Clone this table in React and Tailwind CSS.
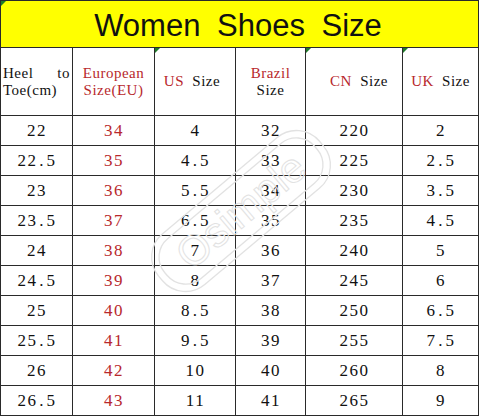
import React from 'react'

const rows = [
  ['22', '34', '4', '32', '220', '2'],
  ['22.5', '35', '4.5', '33', '225', '2.5'],
  ['23', '36', '5.5', '34', '230', '3.5'],
  ['23.5', '37', '6.5', '35', '235', '4.5'],
  ['24', '38', '7', '36', '240', '5'],
  ['24.5', '39', '8', '37', '245', '6'],
  ['25', '40', '8.5', '38', '250', '6.5'],
  ['25.5', '41', '9.5', '39', '255', '7.5'],
  ['26', '42', '10', '40', '260', '8'],
  ['26.5', '43', '11', '41', '265', '9'],
]

const Marker = () => (
  <span className="absolute left-0 top-0 w-0 h-0 border-t-[5px] border-r-[5px] border-t-[#1f7a2a] border-r-transparent" />
)

const Num = ({ value }) => {
  // period in the source font is as wide as a digit
  const parts = value.split('.')
  if (parts.length === 1) return value
  return (
    <>
      {parts[0]}
      <span className="inline-block w-[9px] text-center">.</span>
      {parts[1]}
    </>
  )
}

export default function App() {
  const red = 'text-[#b8282c]'
  const cell = 'relative border-r border-b border-[#2a2a2a] flex items-center justify-center'
  return (
    <div className="w-[480px] h-[417px] bg-white">
      <div className="relative w-[479px] border-t border-l border-[#2a2a2a] font-['Liberation_Serif',serif] text-[#111]">
        <div className="relative h-[47px] bg-[#ffff00] border-r border-b border-[#2a2a2a] flex items-center justify-center">
          <Marker />
          <span className="font-['Liberation_Sans',Arial,sans-serif] text-[31px] leading-none [word-spacing:8px] pr-[3px] pt-[2px]">
            Women Shoes Size
          </span>
        </div>

        <div className="grid grid-cols-[72px_82px_81px_70px_97px_76px] grid-rows-[68px] text-[15px] leading-[17px] tracking-[0.5px]">
          <div className={cell + ' flex-col !items-stretch px-[2px]'}>
            <div className="flex justify-between"><span>Heel</span><span>to</span></div>
            <div>Toe(cm)</div>
          </div>
          <div className={cell + ' flex-col ' + red}>
            <div>European</div>
            <div>Size(EU)</div>
          </div>
          <div className={cell}>
            <Marker />
            <span className="[word-spacing:4px] pr-[6px]"><span className={red}>US</span> Size</span>
          </div>
          <div className={cell + ' flex-col'}>
            <div className={red}>Brazil</div>
            <div>Size</div>
          </div>
          <div className={cell + ' pl-[10px]'}>
            <Marker />
            <span className="[word-spacing:4px]"><span className={red}>CN</span> Size</span>
          </div>
          <div className={cell}>
            <Marker />
            <span className="[word-spacing:4px]"><span className={red}>UK</span> Size</span>
          </div>
        </div>

        <div className="grid grid-cols-[72px_82px_81px_70px_97px_76px] auto-rows-[30px] text-[17px] tracking-[1.5px]">
          {rows.map((r) =>
            r.map((v, i) => (
              <div key={r[0] + '-' + i} className={cell + (i === 1 ? ' ' + red : '')}>
                <span className="pl-[1px]"><Num value={v} /></span>
              </div>
            ))
          )}
        </div>

        <svg
          className="absolute left-[125px] top-[115px] pointer-events-none"
          width="230"
          height="190"
          viewBox="0 0 230 190"
        >
          <g transform="rotate(-40 115 95)" fill="none" stroke="#e2e2e2" strokeWidth="1.3">
            <rect x="10" y="62" width="210" height="66" rx="30" />
            <rect x="17" y="69" width="196" height="52" rx="24" />
            <text
              x="115"
              y="109"
              textAnchor="middle"
              fontFamily="Liberation Sans, sans-serif"
              fontSize="42"
              strokeWidth="1"
            >
              Osimple
            </text>
          </g>
        </svg>
      </div>
    </div>
  )
}
